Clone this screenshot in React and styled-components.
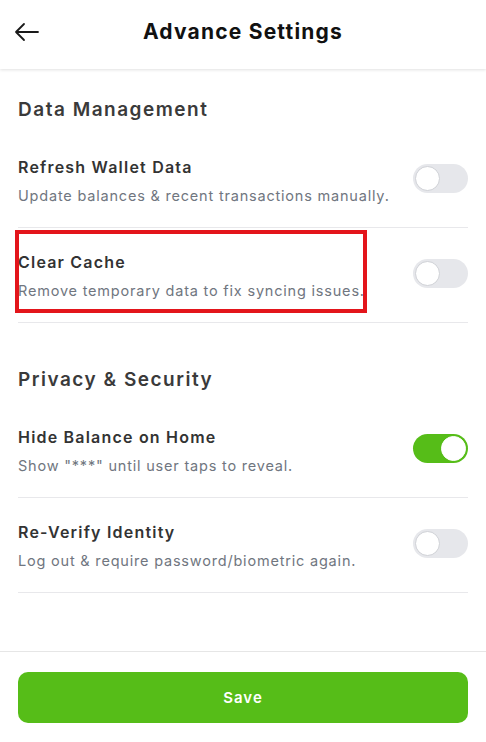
import styled, { createGlobalStyle } from "styled-components";

const GlobalStyle = createGlobalStyle`
  * { box-sizing: border-box; }
  html, body { margin: 0; padding: 0; background: #fff; }
  body { font-family: "Inter", "Noto Sans", sans-serif; }
`;

const Page = styled.div`
  width: 100vw;
  height: 100vh;
  display: flex;
  flex-direction: column;
  background: #fff;
`;

const Header = styled.header`
  height: 69px;
  flex-shrink: 0;
  display: flex;
  align-items: center;
  justify-content: center;
  position: relative;
  box-shadow: 0 1px 3px rgba(0, 0, 0, 0.12);
  z-index: 1;
`;

const BackButton = styled.button`
  position: absolute;
  left: 13px;
  top: 20px;
  width: 28px;
  height: 24px;
  padding: 0;
  border: none;
  background: none;
  display: flex;
  align-items: center;
  justify-content: center;
  cursor: pointer;
`;

const HeaderTitle = styled.h1`
  margin: 0 0 6px;
  font-size: 21px;
  font-weight: 700;
  letter-spacing: 1.2px;
  color: #111;
`;

const Content = styled.main`
  flex: 1;
  padding: 27px 18px 0;
`;

const Section = styled.section`
  & + & {
    margin-top: 43px;
  }
`;

const SectionTitle = styled.h2`
  margin: 0 0 9px;
  font-size: 19px;
  line-height: 28px;
  font-weight: 600;
  letter-spacing: 1.5px;
  color: #3a3a3a;
`;

const Row = styled.div`
  position: relative;
  display: flex;
  align-items: center;
  justify-content: space-between;
  padding: 22px 0 20px;
  border-bottom: 1px solid #e8e8eb;
`;

const RowText = styled.div`
  display: flex;
  flex-direction: column;
  gap: 6px;
`;

const RowTitle = styled.div`
  font-size: 16px;
  line-height: 24px;
  font-weight: 600;
  letter-spacing: 1.2px;
  color: #333;
`;

const RowDesc = styled.div`
  font-size: 14.5px;
  line-height: 22px;
  letter-spacing: 0.8px;
  color: #707680;
`;

const Highlight = styled.div`
  position: absolute;
  left: -3px;
  top: 2px;
  width: 352px;
  height: 83px;
  border: 4px solid #e3151b;
  pointer-events: none;
`;

const Track = styled.button`
  width: 55px;
  height: 29px;
  flex-shrink: 0;
  margin-bottom: 5px;
  padding: 0 2px;
  border: none;
  border-radius: 15px;
  background: ${(p) => (p.on ? "#56bd18" : "#e6e7eb")};
  display: flex;
  align-items: center;
  justify-content: ${(p) => (p.on ? "flex-end" : "flex-start")};
  cursor: pointer;
`;

const Knob = styled.span`
  width: 25px;
  height: 25px;
  border-radius: 50%;
  background: #fff;
  border: 1px solid ${(p) => (p.on ? "#fff" : "#cfd1d6")};
`;

const Footer = styled.footer`
  flex-shrink: 0;
  border-top: 1px solid #e6e6e6;
  padding: 20px 18px 19px;
`;

const SaveButton = styled.button`
  width: 100%;
  height: 51px;
  border: none;
  border-radius: 10px;
  background: #56bd18;
  color: #fff;
  font-family: inherit;
  font-size: 15px;
  font-weight: 600;
  letter-spacing: 1px;
  cursor: pointer;
`;

const sections = [
  {
    title: "Data Management",
    rows: [
      { title: "Refresh Wallet Data", desc: "Update balances & recent transactions manually.", on: false },
      { title: "Clear Cache", desc: "Remove temporary data to fix syncing issues.", on: false, marked: true },
    ],
  },
  {
    title: "Privacy & Security",
    rows: [
      { title: "Hide Balance on Home", desc: 'Show "***" until user taps to reveal.', on: true },
      { title: "Re-Verify Identity", desc: "Log out & require password/biometric again.", on: false },
    ],
  },
];

const Toggle = ({ on }) => (
  <Track on={on ? 1 : 0}>
    <Knob on={on ? 1 : 0} />
  </Track>
);

const App = () => {
  return (
    <Page>
      <GlobalStyle />
      <Header>
        <BackButton>
          <svg width="26" height="20" viewBox="0 0 26 20" fill="none" stroke="#1a1a1a" strokeWidth="1.8" strokeLinecap="round" strokeLinejoin="round">
            <path d="M2 10h22M10 2L2 10l8 8" />
          </svg>
        </BackButton>
        <HeaderTitle>Advance Settings</HeaderTitle>
      </Header>
      <Content>
        {sections.map((s) => (
          <Section key={s.title}>
            <SectionTitle>{s.title}</SectionTitle>
            {s.rows.map((r) => (
              <Row key={r.title}>
                <RowText>
                  <RowTitle>{r.title}</RowTitle>
                  <RowDesc>{r.desc}</RowDesc>
                </RowText>
                <Toggle on={r.on} />
                {r.marked && <Highlight />}
              </Row>
            ))}
          </Section>
        ))}
      </Content>
      <Footer>
        <SaveButton>Save</SaveButton>
      </Footer>
    </Page>
  );
};

export default App;
